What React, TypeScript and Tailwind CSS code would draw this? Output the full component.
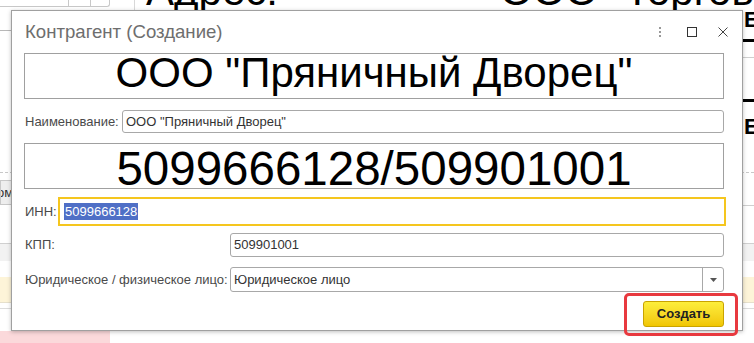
import React from "react";

function Background() {
  return (
    <div className="absolute inset-0">
      {/* top-left tab edges */}
      <div className="absolute left-0 top-0 w-[110px] h-[7px] border-b border-r border-[#c8c8c8] rounded-br-[3px]" />
      <div className="absolute left-[68px] top-0 w-px h-[7px] bg-[#c8c8c8]" />
      <div className="absolute left-[90px] top-0 w-px h-[7px] bg-[#c8c8c8]" />
      <div className="absolute left-[134px] top-0 w-px h-[12px] bg-[#d8d8d8]" />
      <div className="absolute left-0 top-[30px] w-[20px] h-px bg-[#b8b8b8]" />
      {/* big text above dialog */}
      <div className="absolute left-[146px] top-[-30px] text-[42px] leading-none text-black">Адрес:</div>
      <div className="absolute left-[500px] top-[-30px] text-[42px] leading-none text-black whitespace-nowrap">ООО "Торговый дом"</div>
      {/* right strip */}
      <div className="absolute left-[744px] top-[9px] text-[22px] leading-none font-bold text-black">Е</div>
      <div className="absolute left-[743px] top-[39px] w-[11px] h-[3px] bg-black" />
      <div className="absolute left-[743px] top-[57px] w-[11px] h-px bg-[#cfcfcf]" />
      <div className="absolute left-[743px] top-[99px] w-[11px] h-[3px] bg-black" />
      <div className="absolute left-[744px] top-[116px] text-[22px] leading-none font-bold text-black">Е</div>
      {/* dashed line */}
      <div className="absolute left-0 top-[172px] w-[754px] border-t border-dashed border-[#c8c8c8]" />
      <div className="absolute left-0 top-[180px] w-[20px] h-[25px] bg-[#eeeeee] border border-[#c8c8c8] text-[13px] leading-[23px] text-[#333] pl-0 overflow-hidden">
        <span className="ml-[-4px]">ом</span>
      </div>
      <div className="absolute left-[743px] top-[205px] w-[11px] h-px bg-[#cfcfcf]" />
      <div className="absolute left-0 top-[243px] w-[754px] h-[18px] bg-[#f2f2f2] border-t border-[#d0d0d0]" />
      <div className="absolute left-0 top-[277px] w-[754px] h-[26px] bg-[#fdf4d8] border-b border-[#e6e0cc]" />
      <div className="absolute left-0 top-[308px] w-[754px] h-px bg-[#dcdcdc]" />
      <div className="absolute left-0 top-[331px] w-[110px] h-[12px] bg-[#fbd9db]" />
    </div>
  );
}

function Dialog() {
  return (
    <div className="absolute left-[11px] top-[10px] w-[732px] h-[321px] bg-white border border-[#a0a0a0] shadow-[0_1px_4px_rgba(0,0,0,0.25)] flex flex-col">
      {/* header */}
      <div className="h-[42px] flex items-center pl-[13px] pr-[14px] shrink-0">
        <div className="text-[18.6px] leading-none text-[#6e6e6e]">Контрагент (Создание)</div>
        <div className="ml-auto flex items-center">
          <svg width="4" height="12" viewBox="0 0 4 12" className="mr-[25px]">
            <circle cx="2" cy="2" r="1" fill="#777" />
            <circle cx="2" cy="6" r="1" fill="#777" />
            <circle cx="2" cy="10" r="1" fill="#777" />
          </svg>
          <svg width="10" height="10" viewBox="0 0 10 10" className="mr-[21px]">
            <rect x="0.5" y="0.5" width="9" height="9" fill="none" stroke="#333" strokeWidth="1" />
          </svg>
          <svg width="10" height="10" viewBox="0 0 10 10">
            <path d="M0.5 0.5 L9.5 9.5 M9.5 0.5 L0.5 9.5" stroke="#444" strokeWidth="1" fill="none" />
          </svg>
        </div>
      </div>
      {/* content */}
      <div className="flex flex-col pl-[12px] pr-[18px]">
        <div className="h-[46px] border border-[#a0a0a0] flex items-center justify-center pb-[6px]">
          <span className="text-[42px] leading-none text-black whitespace-nowrap">ООО "Пряничный Дворец"</span>
        </div>
        <div className="mt-[11px] flex items-center h-[23px]">
          <div className="w-[98px] pl-px text-[13px] text-[#4a4a4a]">Наименование:</div>
          <div className="flex-1 h-[23px] border border-[#a8a8a8] rounded-[3px] flex items-center px-[3px] text-[13px] text-[#333]">
            ООО "Пряничный Дворец"
          </div>
        </div>
        <div className="mt-[10px] h-[46px] border border-[#a0a0a0] flex items-center justify-center pt-[5px]">
          <span className="text-[47.5px] leading-none text-black whitespace-nowrap">5099666128/509901001</span>
        </div>
        <div className="mt-[8px] flex items-center h-[29px]">
          <div className="w-[34px] pl-px text-[13px] text-[#4a4a4a]">ИНН:</div>
          <div className="flex-1 mr-[-2px] h-[29px] border-2 border-[#f5c61e] flex items-center pl-[4px]">
            <span className="bg-[#4f6fc6] text-white text-[13px] leading-[17px] px-px">5099666128</span>
          </div>
        </div>
        <div className="mt-[7px] flex items-center h-[24px]">
          <div className="w-[206px] pl-px text-[13px] text-[#4a4a4a]">КПП:</div>
          <div className="flex-1 h-[24px] border border-[#a8a8a8] rounded-[3px] flex items-center px-[3px] text-[13px] text-[#333]">
            509901001
          </div>
        </div>
        <div className="mt-[10px] flex items-center h-[25px]">
          <div className="w-[206px] pl-px text-[13px] text-[#4a4a4a] whitespace-nowrap">Юридическое / физическое лицо:</div>
          <div className="flex-1 h-[25px] border border-[#a8a8a8] rounded-[3px] flex items-center text-[13px] text-[#333]">
            <div className="flex-1 px-[3px]">Юридическое лицо</div>
            <div className="w-[21px] h-full border-l border-[#a8a8a8] flex items-center justify-center">
              <svg width="7" height="4" viewBox="0 0 7 4">
                <path d="M0 0 L7 0 L3.5 4 Z" fill="#555" />
              </svg>
            </div>
          </div>
        </div>
        <div className="mt-[9px] flex justify-end">
          <div className="w-[81px] h-[26px] rounded-[3px] border border-[#c9a300] bg-gradient-to-b from-[#fdee3a] to-[#f1c600] flex items-center justify-center text-[13px] font-bold text-[#222]">
            Создать
          </div>
        </div>
      </div>
    </div>
  );
}

export default function App() {
  return (
    <div
      className="relative w-[754px] h-[343px] overflow-hidden bg-white"
      style={{ fontFamily: '"Liberation Sans", Arial, sans-serif' }}
    >
      <Background />
      <Dialog />
      <div className="absolute left-[624px] top-[293px] w-[114px] h-[43px] border-[3px] border-[#e8393f] rounded-[5px]" />
    </div>
  );
}
